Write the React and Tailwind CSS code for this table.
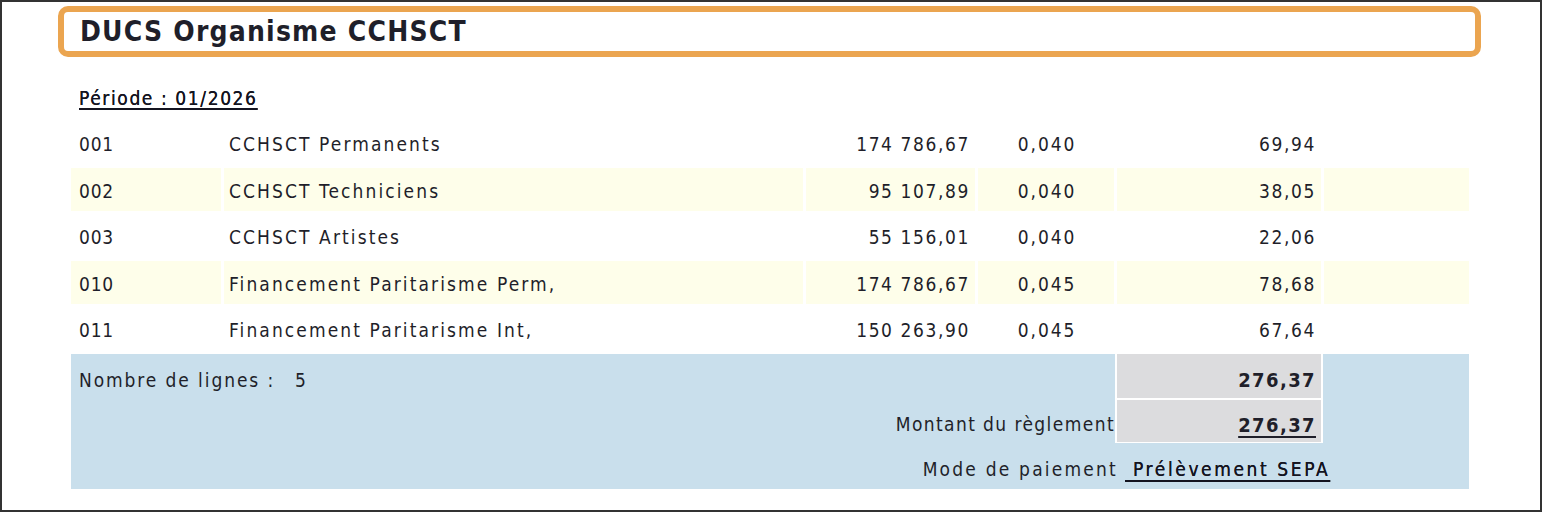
import React from "react";

const rows = [
  { code: "001", label: "CCHSCT Permanents", base: "174 786,67", taux: "0,040", montant: "69,94", alt: false },
  { code: "002", label: "CCHSCT Techniciens", base: "95 107,89", taux: "0,040", montant: "38,05", alt: true },
  { code: "003", label: "CCHSCT Artistes", base: "55 156,01", taux: "0,040", montant: "22,06", alt: false },
  { code: "010", label: "Financement Paritarisme Perm,", base: "174 786,67", taux: "0,045", montant: "78,68", alt: true },
  { code: "011", label: "Financement Paritarisme Int,", base: "150 263,90", taux: "0,045", montant: "67,64", alt: false },
];

export default function App() {
  return (
    <div className="w-[1542px] h-[512px] bg-white border-2 border-[#333] font-['DejaVu_Sans_Condensed','DejaVu_Sans',sans-serif] text-[#1f1f2a] overflow-hidden">
      <div className="ml-[56px] mt-[4px] w-[1423px] h-[51px] border-[6px] border-[#eba550] rounded-[10px] flex items-center pl-[16px]">
        <span className="text-[28px] font-bold leading-none tracking-[1.2px] pt-[1px]">DUCS Organisme CCHSCT</span>
      </div>

      <div className="ml-[77px] mt-[31px] h-[20px] flex items-center">
        <span className="text-[19px] leading-none tracking-[1.6px] text-[#141420] underline underline-offset-[3px] decoration-[1.5px] [text-shadow:0_0_0.4px_#141420]">Période : 01/2026</span>
      </div>

      <div className="ml-[69px] mt-[13px] w-[1398px] flex flex-col gap-y-[3.5px]">
        {rows.map((r) => {
          const bg = r.alt ? "bg-[#fefeea]" : "bg-white";
          return (
            <div key={r.code} className="grid grid-cols-[150px_579px_169px_136px_204px_1fr] gap-x-[3px] h-[43px] text-[19px]">
              <div className={`${bg} flex items-center pl-[8px] pt-[4px] tracking-[0.8px]`}>{r.code}</div>
              <div className={`${bg} flex items-center pl-[5px] pt-[4px] tracking-[2.1px]`}>{r.label}</div>
              <div className={`${bg} flex items-center justify-end pr-[5px] pt-[4px] tracking-[1.6px]`}>{r.base}</div>
              <div className={`${bg} flex items-center justify-center pl-[2px] pt-[4px] tracking-[1.9px]`}>{r.taux}</div>
              <div className={`${bg} flex items-center justify-end pr-[5px] pt-[4px] tracking-[1.6px]`}>{r.montant}</div>
              <div className={bg}></div>
            </div>
          );
        })}

        <div className="bg-[#c9dfec] h-[135px] flex flex-col">
          <div className="flex h-[89px]">
            <div className="flex-1 flex flex-col">
              <div className="h-[44px] flex items-center pl-[8px] pt-[9px] text-[19px] tracking-[1.9px]">
                <span>Nombre de lignes :</span>
                <span className="ml-[20px]">5</span>
              </div>
              <div className="h-[45px] flex items-center justify-end pr-[0px] pt-[9px] text-[19px] tracking-[1.4px]">
                Montant du règlement
              </div>
            </div>
            <div className="w-[208px] bg-white px-[2px] pb-[1px] flex flex-col gap-y-[2px]">
              <div className="h-[44px] bg-[#dcdcde] flex items-center justify-end pr-[5px] pt-[8px] text-[20px] font-bold tracking-[1.4px]">276,37</div>
              <div className="h-[42px] bg-[#dcdcde] flex items-center justify-end pr-[5px] pt-[8px] text-[20px] font-bold tracking-[1.4px]">
                <span className="underline underline-offset-[4px] decoration-[1.5px]">276,37</span>
              </div>
            </div>
            <div className="w-[146px]"></div>
          </div>
          <div className="h-[46px] flex pt-[7px] text-[19px]">
            <div className="w-[1047px] flex items-center justify-end tracking-[2.2px]">Mode de paiement</div>
            <div className="flex items-center pl-[7px]">
              <span className="tracking-[2.6px] text-[#141420] underline underline-offset-[4px] decoration-[1.5px] [text-shadow:0_0_0.5px_#141420]">&nbsp;Prélèvement SEPA</span>
            </div>
          </div>
        </div>
      </div>
    </div>
  );
}
